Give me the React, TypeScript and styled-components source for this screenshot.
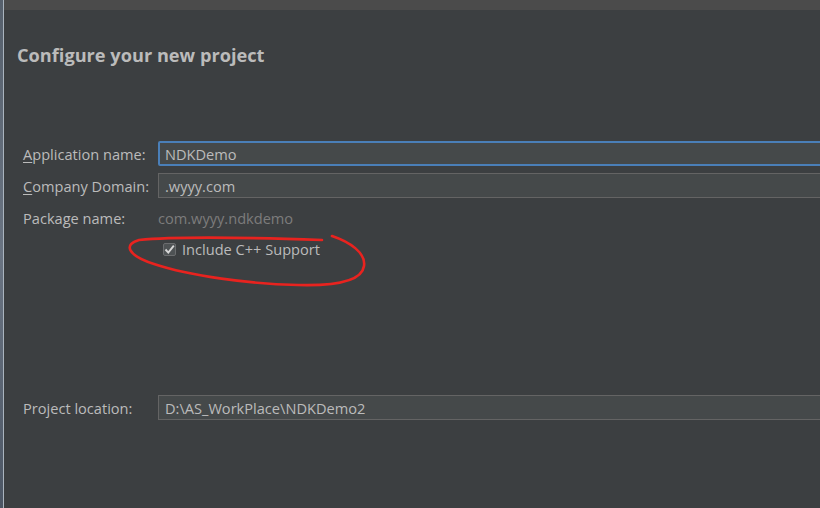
import styled, { createGlobalStyle } from 'styled-components';

const GlobalStyle = createGlobalStyle`
  html, body {
    margin: 0;
    padding: 0;
    background: #3c3f41;
  }
  * {
    box-sizing: border-box;
  }
`;

const fields = [
  { label: 'Application name:', mnemonic: 'A', value: 'NDKDemo', focused: true },
  { label: 'Company Domain:', mnemonic: 'C', value: '.wyyy.com', focused: false },
];

function Label({ text, mnemonic }: { text: string; mnemonic?: string }) {
  if (!mnemonic) return <FieldLabel>{text}</FieldLabel>;
  return (
    <FieldLabel>
      <u>{mnemonic}</u>
      {text.slice(1)}
    </FieldLabel>
  );
}

export default function App() {
  return (
    <>
      <GlobalStyle />
      <Window>
        <FrameEdge />
        <Main>
          <TopBar />
          <Content>
            <Title>Configure your new project</Title>

            <Form>
              {fields.map((f) => (
                <Row key={f.label}>
                  <Label text={f.label} mnemonic={f.mnemonic} />
                  <TextBox $focused={f.focused}>{f.value}</TextBox>
                </Row>
              ))}
              <Row>
                <FieldLabel>Package name:</FieldLabel>
                <PackageValue>com.wyyy.ndkdemo</PackageValue>
              </Row>
              <CheckRow>
                <CheckBox>
                  <svg width="11" height="11" viewBox="0 0 11 11">
                    <path d="M1.5 5.5 L4.3 8.6 L9.8 1.6" fill="none" stroke="#d6d6d6" strokeWidth="1.9" />
                  </svg>
                </CheckBox>
                <CheckLabel>Include C++ Support</CheckLabel>
                <Scribble width="260" height="70" viewBox="120 225 260 70">
                  <path
                    d="M330 236 C348 242, 364 253, 362 266 C360 281, 334 286, 296 285 C248 284, 188 276, 152 264 C124 255, 122 244, 137 240 C178 236, 262 238, 320 240"
                    fill="none"
                    stroke="#e8231f"
                    strokeWidth="2.6"
                    strokeLinecap="round"
                    strokeLinejoin="round"
                  />
                </Scribble>
              </CheckRow>

              <Row $top={127}>
                <FieldLabel>Project location:</FieldLabel>
                <TextBox>D:\AS_WorkPlace\NDKDemo2</TextBox>
              </Row>
            </Form>
          </Content>
        </Main>
      </Window>
    </>
  );
}

const Window = styled.div`
  display: flex;
  width: 820px;
  height: 508px;
  overflow: hidden;
  background: #3c3f41;
  font-family: 'Open Sans', 'Noto Sans', sans-serif;
`;

const FrameEdge = styled.div`
  width: 4px;
  flex-shrink: 0;
  background: linear-gradient(180deg, #56606c 0%, #6a7482 50%, #4c5664 100%);
  border-right: 1px solid #aab4be;
`;

const Main = styled.div`
  flex: 1;
  display: flex;
  flex-direction: column;
  min-width: 0;
`;

const TopBar = styled.div`
  height: 10px;
  background: #4b4b4b;
  flex-shrink: 0;
`;

const Content = styled.div`
  padding: 32px 0 0 13px;
`;

const Title = styled.h1`
  margin: 0;
  font-size: 18.2px;
  line-height: 26px;
  font-weight: 700;
  color: #bbbbbb;
  letter-spacing: 0;
`;

const Form = styled.div`
  display: flex;
  flex-direction: column;
  gap: 7px;
  margin-top: 73px;
  padding-left: 6px;
`;

const Row = styled.div<{ $top?: number }>`
  display: flex;
  align-items: center;
  height: 25px;
  margin-top: ${({ $top }) => ($top ? `${$top}px` : '0')};
`;

const FieldLabel = styled.div`
  width: 135px;
  flex-shrink: 0;
  font-size: 14.6px;
  color: #bbbbbb;

  u {
    text-decoration-thickness: 1px;
    text-underline-offset: 2px;
  }
`;

const TextBox = styled.div<{ $focused?: boolean }>`
  flex: 1;
  height: 25px;
  margin-right: -20px;
  padding: 0 6px;
  display: flex;
  align-items: center;
  font-size: 14.6px;
  color: #bbbbbb;
  background: #45494a;
  border: ${({ $focused }) => ($focused ? '2px solid #4a7fb8' : '1px solid #646464')};
  padding-left: ${({ $focused }) => ($focused ? '5px' : '6px')};
  border-radius: ${({ $focused }) => ($focused ? '2px' : '0')};
`;

const PackageValue = styled.div`
  font-size: 14.6px;
  color: #7c7c7c;
`;

const CheckRow = styled.div`
  position: relative;
  display: flex;
  align-items: center;
  height: 24px;
  padding-left: 140px;
  gap: 6px;
`;

const CheckBox = styled.div`
  width: 13px;
  height: 13px;
  display: flex;
  align-items: center;
  justify-content: center;
  background: #4e5254;
  border: 1px solid #6b6d6f;
  border-radius: 2px;
`;

const CheckLabel = styled.div`
  font-size: 14.6px;
  color: #bbbbbb;
`;

const Scribble = styled.svg`
  position: absolute;
  left: 99px;
  top: -12px;
  pointer-events: none;
`;
